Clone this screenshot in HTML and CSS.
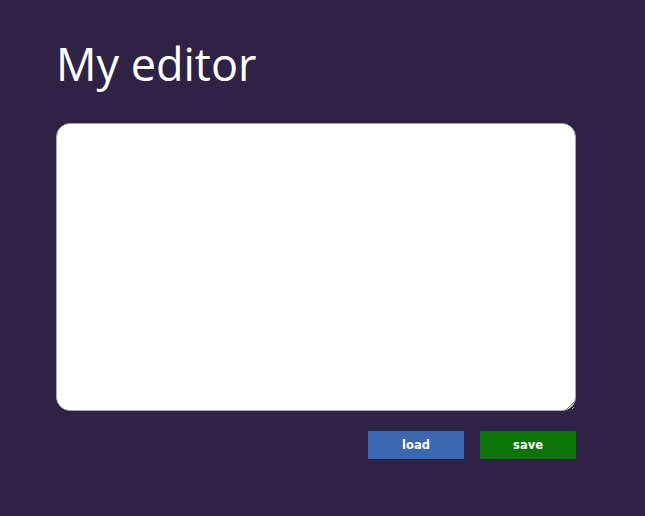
FILE: index.html
```html
<!DOCTYPE html>
<html>
<head>
<meta charset="utf-8">
<link rel="stylesheet" href="styles.css">
</head>
<body>
<main class="app">
  <h1 class="title">My editor</h1>
  <textarea class="editor"></textarea>
  <div class="actions">
    <button class="btn btn-load">load</button>
    <button class="btn btn-save">save</button>
  </div>
</main>
</body>
</html>
```
FILE: styles.css
```css
html, body {
  margin: 0;
  padding: 0;
  background: #2e2344;
  height: 100%;
}
.app {
  width: 520px;
  padding: 36px 0 0 56px;
  display: flex;
  flex-direction: column;
}
.title {
  margin: 0;
  font-family: "Open Sans", sans-serif;
  font-weight: 500;
  font-size: 45px;
  line-height: 56px;
  color: #ffffff;
}
.editor {
  margin-top: 31px;
  box-sizing: border-box;
  width: 520px;
  height: 288px;
  border: 1px solid #a9a9a9;
  border-radius: 14px;
  background: #ffffff;
  padding: 4px;
  resize: both;
}
.actions {
  display: flex;
  justify-content: flex-end;
  gap: 16px;
  margin-top: 20px;
}
.btn {
  width: 96px;
  height: 28px;
  border: none;
  padding: 0;
  color: #ffffff;
  font-family: "DejaVu Sans", sans-serif;
  font-weight: bold;
  font-size: 11.5px;
}
.btn-load {
  background: #3a67ae;
}
.btn-save {
  background: #0c7306;
}
```
